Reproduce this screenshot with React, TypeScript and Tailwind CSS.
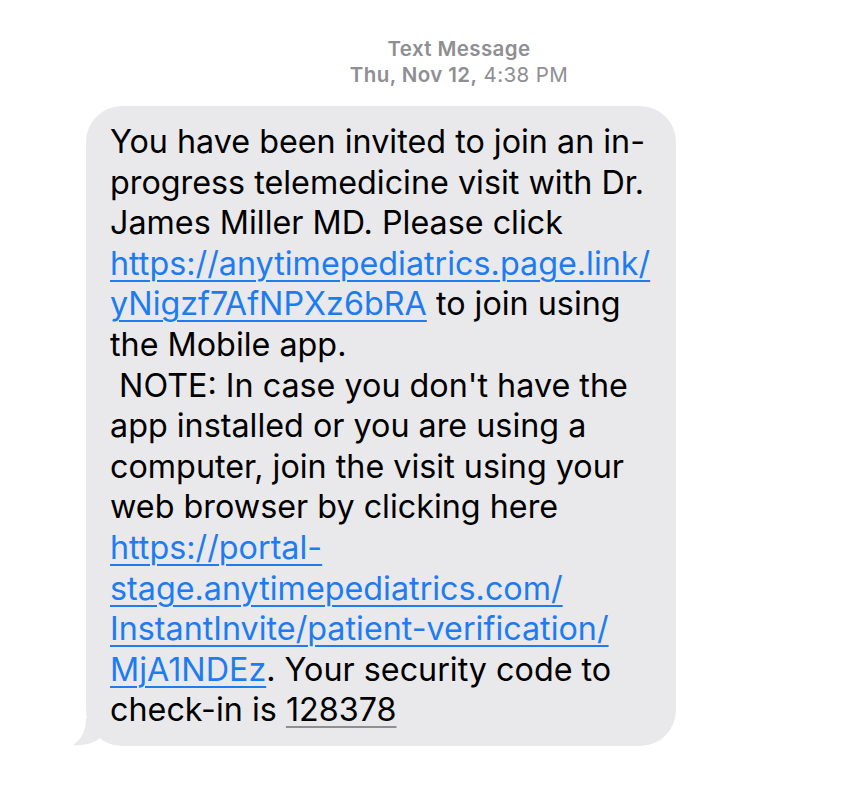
import React from "react";

const Link = ({ children }: { children: React.ReactNode }) => (
  <span className="text-[#1d7cf2] underline decoration-[1.5px] underline-offset-[5px]">
    {children}
  </span>
);

const lines: React.ReactNode[] = [
  "You have been invited to join an in-",
  "progress telemedicine visit with Dr.",
  "James Miller MD. Please click",
  <Link>https://anytimepediatrics.page.link/</Link>,
  <>
    <Link>yNigzf7AfNPXz6bRA</Link> to join using
  </>,
  "the Mobile app.",
  "\u00a0NOTE: In case you don't have the",
  "app installed or you are using a",
  "computer, join the visit using your",
  "web browser by clicking here",
  <Link>https://portal-</Link>,
  <Link>stage.anytimepediatrics.com/</Link>,
  <Link>InstantInvite/patient-verification/</Link>,
  <>
    <Link>MjA1NDEz</Link>. Your security code to
  </>,
  <>
    check-in is{" "}
    <span className="underline decoration-[#8e8e93] decoration-[1.5px] underline-offset-[5px]">
      128378
    </span>
  </>,
];

export default function App() {
  return (
    <div className="w-[854px] h-[796px] bg-white font-['Inter',sans-serif] text-black">
      <div className="pt-[36px] flex flex-col items-center text-[20.5px] leading-[26px] tracking-[0.4px] text-[#8e8e93] pl-[64px]">
        <div className="font-semibold">Text Message</div>
        <div>
          <span className="font-semibold">Thu, Nov 12,</span> 4:38 PM
        </div>
      </div>
      <div className="relative mt-[18px] ml-[86px] w-[590px]">
        <div className="rounded-[36px] bg-[#e9e9eb] pl-[24px] pr-[10px] pt-[16px] pb-[15px] text-[32.3px] leading-[40.6px]">
          {lines.map((l, i) => (
            <div key={i} className="whitespace-pre">
              {l}
            </div>
          ))}
        </div>
        <svg
          className="absolute left-[-13px] bottom-0"
          width="40"
          height="28"
          viewBox="0 0 40 28"
        >
          <path
            d="M13 0 C 13 12, 9 21, 0 27 C 10 28, 18 26, 26 21 L 40 0 Z"
            fill="#e9e9eb"
          />
        </svg>
      </div>
    </div>
  );
}
